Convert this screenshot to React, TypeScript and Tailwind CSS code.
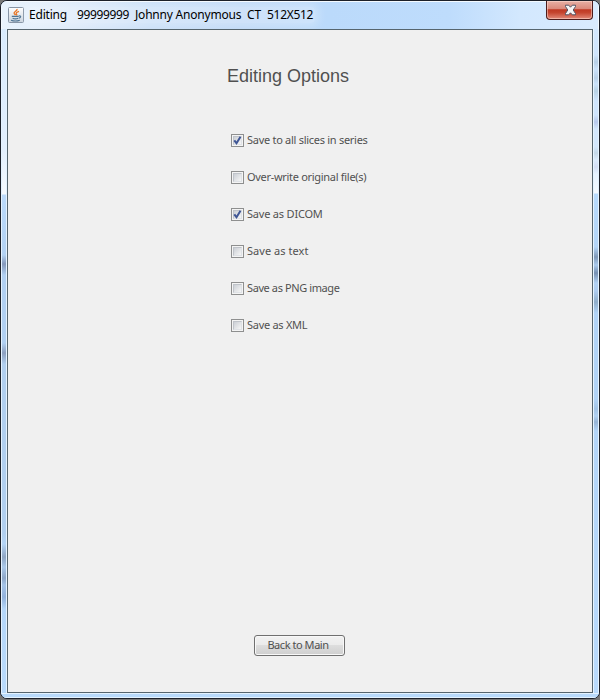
import React from "react";

type Option = { label: string; checked: boolean; spacing: string };

const options: Option[] = [
  { label: "Save to all slices in series", checked: true, spacing: "tracking-[-0.28px]" },
  { label: "Over-write original file(s)", checked: false, spacing: "tracking-[-0.3px]" },
  { label: "Save as DICOM", checked: true, spacing: "tracking-[-0.2px]" },
  { label: "Save as text", checked: false, spacing: "tracking-[0.05px]" },
  { label: "Save as PNG image", checked: false, spacing: "tracking-[-0.4px]" },
  { label: "Save as XML", checked: false, spacing: "tracking-[-0.28px]" },
];

function JavaIcon() {
  return (
    <svg width="16" height="16" viewBox="0 0 16 16" className="block">
      <defs>
        <linearGradient id="tile" x1="0" y1="0" x2="0" y2="1">
          <stop offset="0" stopColor="#ffffff" />
          <stop offset="1" stopColor="#c9d3de" />
        </linearGradient>
      </defs>
      <rect x="0.5" y="0.5" width="15" height="15" rx="1" fill="url(#tile)" stroke="#8795a6" />
      <path d="M9 2c.8 2-3.7 2.6-2.8 4.6.2.6.9 1 1.3 1.5M11 4.3C9 5 7.6 5.8 8.4 7c.4.5.6.9.1 1.5" fill="none" stroke="#e8792b" strokeWidth="1.4" />
      <path d="M3.8 9.3h6.9M4.6 11.2c1.4.6 4.3.6 5.6 0M10.8 9c2.6-.6 2.3 1.7 0 2.1M3 13.2c2.2.8 6.6.8 8.8 0" fill="none" stroke="#4f7594" strokeWidth="1.2" />
    </svg>
  );
}

function Checkbox({ checked }: { checked: boolean }) {
  return (
    <span className="flex h-[13px] w-[13px] shrink-0 items-center justify-center border border-[#8e8f8f] bg-[#f4f4f4] p-px">
      <span className="block h-[9px] w-[9px] border border-[#c0c4ca] border-r-[#dfe2e6] border-b-[#dfe2e6] bg-[linear-gradient(135deg,#cbcfd5,#f6f6f6)]">
        {checked && (
          <svg width="9" height="9" viewBox="0 0 9 9" className="-ml-px -mt-px block overflow-visible">
            <path d="M1.3 4.3 3.5 7.2 7.5.8" fill="none" stroke="#405796" strokeWidth="2" />
          </svg>
        )}
      </span>
    </span>
  );
}

export default function App() {
  return (
    <div className="h-[700px] w-[600px] overflow-hidden bg-[#777] font-['Noto_Sans',sans-serif]">
      <div className="flex h-[699px] w-[600px] flex-col overflow-hidden rounded-[7px] border border-[#1c2029] bg-[#b9d9fb]">
        <div className="flex h-[28px] shrink-0 items-start border-x border-t border-[#f4faff] bg-[linear-gradient(90deg,#e9f3fd_0%,#dceafa_12%,#c9dff8_25%,#bfd9f7_40%,#bbdafb_55%,#bedcfc_75%,#d3e8fe_87%,#d9ebfe_100%)]">
          <div className="ml-[6px] mt-[5px] shrink-0">
            <JavaIcon />
          </div>
          <div className="ml-[5px] mt-[5px] flex rounded bg-white/25 text-[12px] leading-[16px] text-black shadow-[0_0_8px_4px_rgba(255,255,255,0.25)]">
            <span className="w-[48px] whitespace-nowrap tracking-[-0.2px]">Editing</span>
            <span className="w-[58px] whitespace-nowrap tracking-[-0.35px]">99999999</span>
            <span className="w-[112px] whitespace-nowrap tracking-[-0.2px]">Johnny Anonymous</span>
            <span className="w-[20px] whitespace-nowrap">CT</span>
            <span className="w-[48px] whitespace-nowrap tracking-[-0.3px]">512X512</span>
          </div>
          <div className="-mt-px ml-auto mr-[5px] flex h-[19px] w-[47px] items-center justify-center rounded-b-[4px] border border-t-0 border-[#4c1c1c] bg-[linear-gradient(180deg,#e7b0a5_0%,#d9887a_45%,#bf3823_48%,#c5452f_65%,#e38a7a_100%)] shadow-[inset_0_0_0_1px_rgba(255,225,215,0.5)]">
            <svg width="13" height="12" viewBox="0 0 13 12" className="ml-[2px]">
              <path d="M1.5 1.2h3.2l1.8 2 1.8-2h3.2v1.3L9.2 6l2.3 3.5v1.3H8.3l-1.8-2-1.8 2H1.5V9.5L3.8 6 1.5 2.5z" fill="#f5f5f5" stroke="#535666" strokeWidth="1" />
            </svg>
          </div>
        </div>

        <div className="flex min-h-0 flex-1">
          <div className="w-[6px] shrink-0 border-x border-[#e4f2ff] bg-[linear-gradient(180deg,#d9ebfd_0px,#e2effd_120px,#f5faff_165px,#bbdafb_166px,#b3d2f3_226px,#8498bb_235px,#b1d0f2_246px,#b1d0f2_314px,#8c9fbf_324px,#b1cfef_335px,#b1cfef_505px,#b4d4f6_515px,#8fa6c4_528px,#abc9ea_538px,#8ea7c8_549px,#a5c4e8_556px,#92b2dc_568px,#b5d7fa_580px,#b9dafb_664px)]" />
          <main className="flex min-w-0 flex-1 flex-col items-center border border-[#56656e] bg-[#f0f0f0]">
            <h1 className="ml-[-24px] mt-[35px] whitespace-nowrap font-['Liberation_Sans',Arial,sans-serif] text-[18px] leading-[22px] text-[#505050]">
              Editing Options
            </h1>
            <ul className="mt-[45px] flex w-[138px] flex-col gap-[21px]">
              {options.map((o) => (
                <li key={o.label} className="flex h-4 items-center gap-[3px]">
                  <Checkbox checked={o.checked} />
                  <span className={"whitespace-nowrap text-[11px] leading-4 text-[#505050] " + o.spacing}>
                    {o.label}
                  </span>
                </li>
              ))}
            </ul>
            <button className="mb-[36px] mr-[2px] mt-auto h-[21px] w-[91px] rounded-[3px] border border-[#707070] bg-[linear-gradient(180deg,#f2f2f2_0%,#ebebeb_48%,#dddddd_50%,#cfcfcf_100%)] pb-px pr-[2px] text-[11px] leading-[16px] tracking-[-0.45px] text-[#505050] shadow-[inset_0_0_0_1px_#f8f8f8]">
              Back to Main
            </button>
          </main>
          <div className="w-[6px] shrink-0 border-x border-[#e6f4ff] bg-[linear-gradient(180deg,#d3e8fe_0px,#cfe5fd_26px,#b7d0e7_33px,#cce3fb_40px,#b9d1e8_49px,#cbe3fb_55px,#b8d2e5_62px,#cfe5fd_72px,#cfe5fd_86px,#b8c9ec_93px,#d3e7fc_100px,#d3e7fc_118px,#c4d8e8_124px,#dcebfc_131px,#d3def4_138px,#e6f3ff_145px,#f4faff_164px,#b7dafc_165px,#b4d5f7_218px,#8099b8_228px,#a9c9ec_236px,#7690b2_244px,#b1d1f3_254px,#aeccef_262px,#90aeca_273px,#b1d3f6_284px,#b1d3f6_370px,#a2c3e5_380px,#b0d1f2_387px,#97b5d6_393px,#b3d5f8_402px,#b9dafc_664px)]" />
        </div>
        <div className="h-[5px] shrink-0 border-y border-[#e4f3ff] bg-[#b9dafb]" />
      </div>
    </div>
  );
}
